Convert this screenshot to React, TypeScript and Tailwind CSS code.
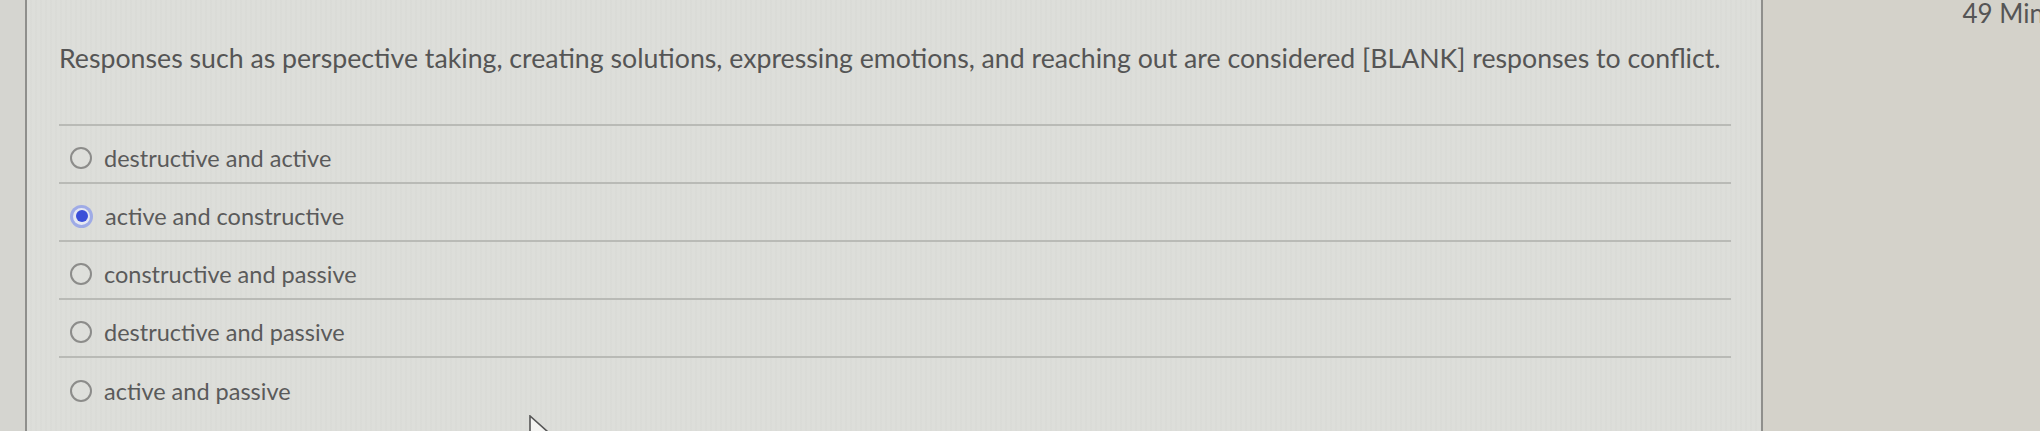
import React from "react";

const options = [
  { label: "destructive and active", selected: false },
  { label: "active and constructive", selected: true },
  { label: "constructive and passive", selected: false },
  { label: "destructive and passive", selected: false },
  { label: "active and passive", selected: false },
];

function Radio({ selected }: { selected: boolean }) {
  if (selected) {
    return (
      <span className="flex h-[23px] w-[23px] shrink-0 items-center justify-center rounded-full bg-[#9fabe6]">
        <span className="flex h-[17px] w-[17px] items-center justify-center rounded-full bg-[#e6e8f2]">
          <span className="h-[12px] w-[12px] rounded-full bg-[#3b4fd8]" />
        </span>
      </span>
    );
  }
  return <span className="h-[22px] w-[22px] shrink-0 rounded-full border-2 border-[#8c8c8a] bg-[#dedfdb]" />;
}

export default function App() {
  return (
    <div
      className="relative flex h-[431px] w-[2040px] overflow-hidden bg-[#d6d6d1] text-[#5a5a5a]"
      style={{ fontFamily: "Lato, 'Open Sans', sans-serif" }}
    >
      <div className="w-[27px] shrink-0 border-r-2 border-[#8f8f8c] bg-[#d5d5d0]" />
      <div className="w-[1734px] shrink-0 bg-[repeating-linear-gradient(90deg,#dddeda_0px,#dddeda_3px,#d8d9d5_4px,#dddeda_5px)] pl-[32px]">
        <div className="w-[1672px]">
          <div className="flex h-[126px] items-start border-b-2 border-[#b9bab6] pt-[42px]">
            <p className="whitespace-nowrap text-[26.7px] leading-[32px] text-[#555555]">
              Responses such as perspective taking, creating solutions, expressing emotions, and reaching out are considered [BLANK] responses to conflict.
            </p>
          </div>
          {options.map((o, i) => (
            <div
              key={o.label}
              className={
                "flex h-[58px] items-center gap-[12px] pl-[11px] pt-[8px] " +
                (i < options.length - 1 ? "border-b-2 border-[#b9bab6]" : "")
              }
            >
              <Radio selected={o.selected} />
              <span className="whitespace-nowrap text-[23.5px] leading-[30px] text-[#5a5a5a]">{o.label}</span>
            </div>
          ))}
        </div>
      </div>
      <div className="flex-1 border-l-2 border-[#8f8f8c] bg-[#d4d2ca]">
        <div className="flex justify-end">
          <span className="mr-[-4px] whitespace-nowrap text-[26px] leading-[26px] text-[#555555]">49 Min</span>
        </div>
      </div>
      <svg
        className="absolute left-[529px] top-[415px]"
        width="24"
        height="30"
        viewBox="0 0 24 30"
        fill="none"
      >
        <path d="M1 1 L1 24 L7 18 L11 28 L15 26 L11 17 L19 17 Z" fill="#f4f4f2" stroke="#555" strokeWidth="1.6" />
      </svg>
    </div>
  );
}
